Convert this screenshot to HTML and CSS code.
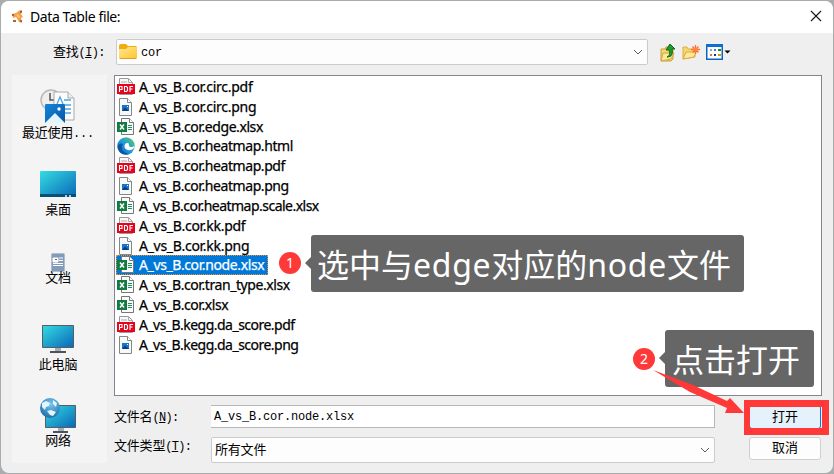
FILE: index.html
```html
<!DOCTYPE html>
<html lang="zh-CN">
<head>
<meta charset="utf-8">
<title>Data Table file:</title>
<link rel="stylesheet" href="styles.css">
</head>
<body>
<svg width="0" height="0" class="defs" aria-hidden="true">
  <defs>
    <linearGradient id="screen" x1="0" y1="0" x2="1" y2="1"><stop offset="0" stop-color="#35dce2"/><stop offset="1" stop-color="#0867b8"/></linearGradient>
    <linearGradient id="gold" x1="0" y1="0" x2="1" y2="1"><stop offset="0" stop-color="#ffe695"/><stop offset="1" stop-color="#ffc62e"/></linearGradient>
    <linearGradient id="blue" x1="0" y1="0" x2="1" y2="1"><stop offset="0" stop-color="#1684d8"/><stop offset="1" stop-color="#0757a8"/></linearGradient>
    <linearGradient id="edge" x1="0" y1="1" x2="1" y2="0"><stop offset="0" stop-color="#0f62b8"/><stop offset=".5" stop-color="#1f9bdc"/><stop offset="1" stop-color="#5dd05c"/></linearGradient>
    <radialGradient id="globe" cx=".55" cy=".3" r=".7"><stop offset="0" stop-color="#78c8ee"/><stop offset="1" stop-color="#1f6ea8"/></radialGradient>
    <symbol id="page" viewBox="0 0 18 18"><path d="M2.500.5h8l4 4v13h-12z" fill="#f8f8f8" stroke="#868686"/><path d="M10.500.5v4h4" fill="#fff" stroke="#868686"/></symbol>
    <symbol id="pdf" viewBox="0 0 18 18"><path d="M2.500.5h9l4 4v12h-13z" fill="#f8f8f8" stroke="#999"/><path d="M11.500.5v4h4M4 4h6" fill="none" stroke="#aaa"/><path d="M0 6h18v10H0z" fill="#e2051c"/><path d="M2.500 14V8.500h2.500v3H2.500M7.500 8.500h2l1 1v3l-1 1h-2zM13 14V8.500h3M13 11h2.500" fill="none" stroke="#fff" stroke-width="1.100"/></symbol>
    <symbol id="png" viewBox="0 0 18 18"><use href="#page"/><path d="M5 7h7v6H5z" fill="#1675c8"/><path d="M5 13 8 9.500l4 3.500z" fill="#083f7c"/><path d="M10 8h1v1h-1z" fill="#fff"/></symbol>
    <symbol id="xlsx" viewBox="0 0 18 18"><path d="M4.500.5h8l4 4v12h-12z" fill="#fafafa" stroke="#777"/><path d="M12.500.5v4h4" fill="#fff" stroke="#777"/><path d="M11 7.500h4M11 9.500h4M11 11.500h4" stroke="#21935a"/><path d="M0 4h10v10H0z" fill="#107c41"/><path d="m3 6.500 4 5m0-5-4 5" stroke="#fff" stroke-width="1.500"/></symbol>
    <symbol id="html" viewBox="0 0 18 18"><circle cx="9" cy="9" r="8.700" fill="url(#edge)"/><path d="M8 7.500c-1.500 2.500.5 5.500 4 5.700 2.500 0 4-1 5-2.700l.5 0-.5-1.500c-1 1.500-5.500 1.500-5-1 0-2.500-2.500-2.500-4-.5z" fill="#fff"/><path d="M6 7c-3 4 0 9 6 10-6 2-11-2-11.500-7C1 7 4 5.500 6 7z" fill="#0c55a5"/></symbol>
  </defs>
</svg>
<main class="dialog">
  <header class="titlebar">
    <svg class="logo" width="12" height="13" viewBox="0 0 12 13"><path d="M0 4 4 3 8 0h2L9 4l2 3-2 1 1 5-3-1-3-5-3 1z" fill="#f0a050"/><path d="M0 4h2v2H0zM8 1h2v2H8zM8 10h2v2H8zM1 10h3v2H1z" fill="#b0603a"/><path d="m4 4 3 1 1 2-2 1z" fill="#ffc65b"/></svg>
    <h1>Data Table file:</h1>
    <svg class="close" width="12" height="12" viewBox="0 0 12 12"><path d="m1 1 10 10M11 1 1 11" stroke="#171717" stroke-width="1.100"/></svg>
  </header>

  <section class="lookin">
    <label>查找<span class="mono">(<u>I</u>):</span></label>
    <div class="combo folder-combo">
      <svg width="18" height="16" viewBox="0 0 18 16"><path d="M0 2Q0 0 2 0h5l2 2h8l1 1v11l-1 1H1l-1-1z" fill="#efad12"/><path d="M0 5h7l2-2h9v11H0z" fill="url(#gold)"/><path d="M1 14.500h16" stroke="#dfa01d"/></svg>
      <span class="mono">cor</span>
      <svg class="chevron" width="10" height="6" viewBox="0 0 10 6"><path d="m1 1 4 4 4-4" fill="none" stroke="#5d5d5d"/></svg>
    </div>
    <div class="tools">
      <svg width="16" height="19" viewBox="0 0 16 19"><path d="M1 6h4l1-2h7v12l-2 2H1z" fill="#f6d66e" stroke="#c79f3a"/><path d="m1 18 2-8h11l-3 6z" fill="#ffe999" stroke="#d0a640"/><path d="M7 14c3-1 3-4 2-7H6l4-6 5 5h-3c1 5 0 8-5 8z" fill="#24992f" stroke="#096c17"/></svg>
      <svg width="18" height="16" viewBox="0 0 18 16"><path d="M1 3h4l1 2h7v8l-12 2z" fill="#f6d66e" stroke="#dcae45"/><path d="m1 15 3-7h10l-2 5z" fill="#ffe999" stroke="#d9aa42"/><path d="M13.500 1v9M9 5.500h9M10.500 2.500l6 6m0-6-6 6" stroke="#ff6b42" stroke-width="1.300"/><circle cx="13.500" cy="5.500" r="2" fill="#ff8a24"/></svg>
      <svg width="26" height="16" viewBox="0 0 26 16"><path d="M.75.75h15.500v14.500H.75z" fill="#fff" stroke="#0864c6" stroke-width="1.500"/><path d="M0 0h17v3H0z" fill="#0b70d2"/><path d="M4 5h2v2H4z" fill="#9ba2ba"/><path d="M8 5h2v2H8z" fill="#3581c7"/><path d="M12 5h3v2h-3z" fill="#128b29"/><path d="M4 10h2v2H4z" fill="#f26a55"/><path d="M8 10h2v2H8z" fill="#17378e"/><path d="M12 10h3v2h-3z" fill="#d29620"/><path d="M18.500 6.500h6l-3 3z" fill="#000"/></svg>
    </div>
  </section>

  <div class="body">
    <nav class="places">
      <div class="place recent">
        <svg width="36" height="35" viewBox="0 0 36 35"><circle cx="11" cy="11" r="10" fill="#eee" stroke="#b9b9b9" stroke-width="1.500"/><path d="M10 4v7h4" fill="none" stroke="#555" stroke-width="1.500"/><path d="M14 3h14l6 6v22H14z" fill="#fbfbfb" stroke="#aaa"/><path d="M28 3v6h6" fill="#eee" stroke="#aaa"/><path d="m17 15 3-7 3 7m1 1h7m-7 4h7m-7 4h7m-7-13h7" fill="none" stroke="#4ba5e0" stroke-width="1.300"/><path d="M5 16q0-1 1-1h18l1 1v18H5z" fill="url(#blue)"/><path d="m5 34 10-10 10 10z" fill="#dff5ff"/><circle cx="19" cy="20" r="1.700" fill="#fff"/></svg>
        <span>最近使用<span class="mono">...</span></span>
      </div>
      <div class="place desktop">
        <svg width="36" height="28" viewBox="0 0 36 28"><rect y="1" width="36" height="26" rx="1" fill="url(#screen)"/><path d="M0 24h36v3H0z" fill="#075076"/><path d="M25 25h2v2h-2zM29 25h2v2h-2z" fill="#b6cbd9"/></svg>
        <span>桌面</span>
      </div>
      <div class="place docs">
        <svg width="14" height="19" viewBox="0 0 14 19"><rect x=".5" y=".5" width="13" height="18" rx="1" fill="#839bb8" stroke="#adbdce"/><path d="M2 5h5v4H2zM8 5h4M8 7.500h4M2 10.500h10M2 12.500h10" fill="#fff" stroke="#fff"/><path d="M4 6.500h2" stroke="#58769b"/></svg>
        <span>文档</span>
      </div>
      <div class="place computer">
        <svg width="32" height="29" viewBox="0 0 32 29"><path d="M.5 1.500h31v22H.5z" fill="url(#screen)" stroke="#5a5c62"/><path d="M13 24h6v3h-6z" fill="#a5adb7"/><path d="M8 27h16v2H8z" fill="#4c535b"/></svg>
        <span>此电脑</span>
      </div>
      <div class="place network">
        <svg width="36" height="36" viewBox="0 0 36 36"><path d="M5.500 7.500h30v22h-30z" fill="url(#screen)" stroke="#5a5c62"/><path d="M18 30h6v3h-6z" fill="#a5adb7"/><path d="M13 33h15v2H13z" fill="#4c535b"/><circle cx="10" cy="10" r="10" fill="url(#globe)"/><path d="M2 5 6 3l4 2-1 3-3 1-1 3-3-3zM11 12l5 2-3 4-3-1-3-4zM13 2l4 3-1 4-3-3z" fill="#e4f5fc"/></svg>
        <span>网络</span>
      </div>
    </nav>

    <div class="content">
      <ul class="files">
        <li class="loose"><svg><use href="#pdf"/></svg><span>A_vs_B.cor.circ.pdf</span></li>
        <li class="loose"><svg><use href="#png"/></svg><span>A_vs_B.cor.circ.png</span></li>
        <li><svg><use href="#xlsx"/></svg><span>A_vs_B.cor.edge.xlsx</span></li>
        <li><svg><use href="#html"/></svg><span>A_vs_B.cor.heatmap.html</span></li>
        <li><svg><use href="#pdf"/></svg><span>A_vs_B.cor.heatmap.pdf</span></li>
        <li><svg><use href="#png"/></svg><span>A_vs_B.cor.heatmap.png</span></li>
        <li class="tight"><svg><use href="#xlsx"/></svg><span>A_vs_B.cor.heatmap.scale.xlsx</span></li>
        <li class="loose"><svg><use href="#pdf"/></svg><span>A_vs_B.cor.kk.pdf</span></li>
        <li class="loose"><svg><use href="#png"/></svg><span>A_vs_B.cor.kk.png</span></li>
        <li class="selected"><svg><use href="#xlsx"/></svg><span>A_vs_B.cor.node.xlsx</span></li>
        <li><svg><use href="#xlsx"/></svg><span>A_vs_B.cor.tran_type.xlsx</span></li>
        <li><svg><use href="#xlsx"/></svg><span>A_vs_B.cor.xlsx</span></li>
        <li class="tight"><svg><use href="#pdf"/></svg><span>A_vs_B.kegg.da_score.pdf</span></li>
        <li class="tight"><svg><use href="#png"/></svg><span>A_vs_B.kegg.da_score.png</span></li>
      </ul>
      <form class="fields">
        <label>文件名<span class="mono">(<u>N</u>):</span></label>
        <div class="filename mono">A_vs_B.cor.node.xlsx</div>
        <button type="button" class="open">打开</button>
        <label class="type-label">文件类型<span class="mono">(<u>T</u>):</span></label>
        <div class="combo type-combo"><span>所有文件</span><svg class="chevron" width="10" height="6" viewBox="0 0 10 6"><path d="m1 1 4 4 4-4" fill="none" stroke="#5d5d5d"/></svg></div>
        <button type="button" class="cancel">取消</button>
      </form>
    </div>
  </div>
</main>

<div class="badge badge-one">1</div>
<div class="callout callout-one"><span>选中与<i>edge</i>对应的<i>node</i>文件</span></div>
<div class="badge badge-two">2</div>
<div class="callout callout-two"><span>点击打开</span></div>
<div class="highlight"></div>
<svg class="arrow" width="94" height="46" viewBox="0 0 94 46"><path d="M0 0 40 15 74 31 77 28 91 43 72 43 74 38 37 22z" fill="#ff3838"/></svg>
</body>
</html>
```
FILE: styles.css
```css
* { box-sizing: border-box; }
body {
  margin: 0;
  width: 834px;
  height: 474px;
  padding: 1px;
  overflow: hidden;
  background: #a9abad;
  color: #000;
  font: 13px/16px "Noto Sans CJK SC", sans-serif;
  letter-spacing: -.2px;
}
.defs { position: absolute; }
svg { display: block; flex: none; }
.mono { font-family: "Liberation Mono", "Noto Sans CJK SC", monospace; font-size: 12px; letter-spacing: -.2px; }
label .mono { letter-spacing: -.7px; }
.dialog {
  width: 832px;
  height: 472px;
  overflow: hidden;
  border-radius: 8px;
  background: #efefef;
}
.titlebar { display: flex; align-items: center; height: 32px; padding: 0 11px 2px 11px; background: #fff; }
.titlebar h1 { margin: 2px 0 0 6px; font: 14px/18px "Noto Sans", sans-serif; letter-spacing: -.4px; }
.close { margin-left: auto; }
.lookin { display: flex; height: 42px; padding: 6px 0 0 52px; }
.lookin > label { width: 63px; padding-top: 4px; }
.combo { display: flex; align-items: center; height: 26px; border: 1px solid #cbcbcb; border-radius: 2px; background: #fdfdfd; }
.folder-combo { width: 532px; padding: 0 4px 0 2px; }
.folder-combo > .mono { margin: 2px 0 0 4px; }
.chevron { margin-left: auto; }
.tools { display: flex; align-items: center; gap: 6px; height: 26px; margin-left: 12px; }
.body { display: flex; padding-left: 11px; gap: 7px; }
.places { width: 95px; height: 388px; background: #f4f4f4; }
.place { display: flex; flex-direction: column; align-items: center; padding-right: 3px; }
.recent { padding-top: 14px; height: 95px; }
.desktop { height: 83px; }
.desktop > span { margin-top: 3px; }
.docs { height: 71px; }
.docs > span { margin-top: -3px; }
.computer { height: 75px; }
.computer > span { margin-top: 3px; }
.network > svg { margin-top: -1px; }
.network > span { margin-top: -2px; }
.content { width: 708px; }
.files { height: 321px; margin: 0; padding: 1px 0 0 1px; list-style: none; border: 1px solid #84858f; background: #fff; }
.files li { display: flex; align-items: center; width: max-content; height: 19.83px; padding: 0 4px 0 1px; font: 14px/18px "Noto Sans", sans-serif; letter-spacing: -.42px; -webkit-text-stroke: .25px; }
.files .loose { letter-spacing: -.28px; }
.files .tight { letter-spacing: -.52px; }
.files svg { width: 18px; height: 18px; }
.files span { margin-left: 4px; }
.files .selected { color: #fff; background: #0078d7; outline: 1px dotted #ed912f; outline-offset: -1px; letter-spacing: -.38px; }
.fields { display: grid; grid-template-columns: 97px 538px 73px; grid-template-rows: 32px 28px; margin-top: 9px; }
.fields label { padding-top: 3px; }
.fields .type-label { padding-top: 0; }
.filename { display: flex; align-items: center; width: 504px; height: 23px; padding: 1px 0 0 3px; border: 1px solid #b7b7b7; border-left: 0; background: #fff; }
.type-combo { width: 504px; padding: 0 4px 0 3px; }
.type-combo > span { margin-top: -2px; }
button { width: 72px; height: 23px; margin: 0; padding: 0 0 3px; border: 1px solid #cfcfcf; border-radius: 3px; background: #fdfdfd; color: #000; font: inherit; }
.open { height: 24px; padding-bottom: 2px; background: #e5f1fb; border-color: #0078d7; }
.badge { position: absolute; width: 22px; height: 22px; border-radius: 50%; background: #ff3838; color: #fff; font: 14px/21px "Noto Sans", sans-serif; text-align: center; }
.badge-one { left: 279px; top: 252px; }
.badge-two { left: 633px; top: 348px; }
.callout { position: absolute; height: 57px; border-radius: 3px; background: #666; color: #fff; font: 32px/57px "Noto Sans CJK SC", sans-serif; letter-spacing: 0; white-space: nowrap; }
.callout::before { content: ""; position: absolute; left: -6px; top: 22px; border: 6px solid transparent; border-left: 0; border-right-color: #666; }
.callout i { font-family: "Noto Sans", sans-serif; font-style: normal; letter-spacing: .7px; }
.callout-one { left: 311px; top: 235px; width: 433px; padding-left: 6px; }
.callout-two { left: 665px; top: 330px; width: 149px; padding-left: 7px; }
.highlight { position: absolute; left: 744px; top: 400px; width: 85px; height: 35px; border: 7px solid #ff3838; border-left-width: 6px; }
.arrow { position: absolute; left: 653px; top: 370px; }
```
